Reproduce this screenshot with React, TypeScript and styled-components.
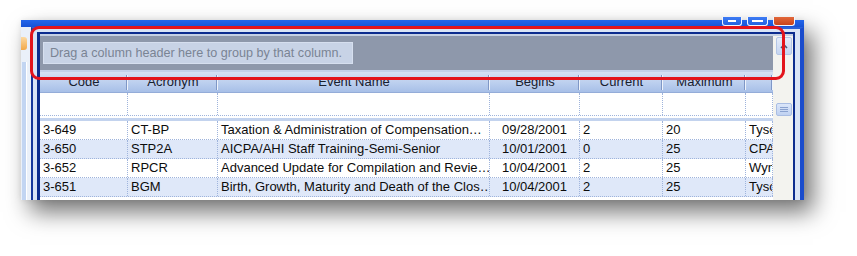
import styled, { createGlobalStyle } from 'styled-components';

const Global = createGlobalStyle`
  html, body {
    margin: 0;
    padding: 0;
    background: #fff;
  }
  body {
    font-family: "Liberation Sans", Arial, sans-serif;
  }
`;

const Canvas = styled.div`
  width: 857px;
  height: 256px;
  box-sizing: border-box;
  padding: 20px 0 0 21px;
  background: #fff;
  overflow: hidden;
`;

const Shot = styled.div`
  position: relative;
  width: 783px;
  height: 180px;
  display: flex;
  flex-direction: column;
  box-shadow: 9px 12px 22px rgba(0, 0, 0, 0.55), 0 0 6px rgba(0, 0, 0, 0.08);
`;

const TitleStrip = styled.div`
  flex: none;
  height: 7px;
  display: flex;
  justify-content: flex-end;
  align-items: flex-start;
  gap: 5px;
  padding-right: 9px;
  background: linear-gradient(#2466ea, #1652d6);
`;

const CaptionButton = styled.div<{ $close?: boolean; $w: number }>`
  width: ${p => p.$w}px;
  height: 9px;
  margin-top: -3px;
  box-sizing: border-box;
  border: 1px solid #f2f6ff;
  border-top: none;
  border-radius: 0 0 3px 3px;
  background: ${p => (p.$close ? 'linear-gradient(#e2683a, #c9431b)' : 'linear-gradient(#3d7bf4, #2262e2)')};
  display: flex;
  align-items: flex-end;
  justify-content: center;
  padding-bottom: 3px;
`;

const CaptionGlyph = styled.div<{ $w: number }>`
  width: ${p => p.$w}px;
  height: 2px;
  background: #fff;
`;

const Body = styled.div`
  flex: 1;
  min-height: 0;
  display: flex;
  overflow: hidden;
`;

const SideStrip = styled.div`
  flex: none;
  width: 10px;
  display: flex;
  flex-direction: column;
  gap: 12px;
  padding-top: 10px;
  box-sizing: border-box;
  background: #eaf0f9;
`;

const SideTab = styled.div`
  width: 6px;
  height: 13px;
  border-radius: 0 3px 3px 0;
  background: linear-gradient(#fcd9a2, #f2a848);
`;

const SideBar = styled.div`
  flex: 1;
  width: 4px;
  margin-left: 1px;
  background: #c2d5f2;
  border-right: 1px solid #fff;
`;

const Frame = styled.div`
  flex: 1;
  display: flex;
  border-left: 2px solid #16389c;
  border-top: 2px solid #2a60d8;
  border-right: 4px solid #1a4ccc;
  padding: 3px 5px 0 4px;
  background: #d9e4f6;
`;

const Control = styled.div`
  flex: 1;
  display: flex;
  border: 0 solid #0c2c8e;
  border-width: 2px 2px 0 3px;
  padding-top: 2px;
  background: #c6d1e4;
`;

const Main = styled.div`
  width: 733px;
  flex: none;
  display: flex;
  flex-direction: column;
  background: #fff;
`;

const GroupPanel = styled.div`
  flex: none;
  height: 36px;
  padding: 6px 0 0 3px;
  box-sizing: border-box;
  background: #8e98ab;
  border-bottom: 2px solid #c3d1ea;
`;

const DropBox = styled.div`
  width: 310px;
  height: 22px;
  box-sizing: border-box;
  padding-left: 6px;
  border: 1px solid #d6dfef;
  background: #c8d3e6;
  color: #7a8494;
  font-size: 12.6px;
  line-height: 20px;
  white-space: nowrap;
`;

const COLS = '88px 90px 272px 90px 83px 83px 1fr';

const HeaderRow = styled.div`
  flex: none;
  height: 21px;
  display: grid;
  grid-template-columns: ${COLS};
  background: linear-gradient(#d6e1f4, #b9cdee 60%, #a7bfe7);
  border-bottom: 1px solid #94acd8;
  box-sizing: border-box;
`;

const HeaderCell = styled.div`
  font-size: 13px;
  line-height: 20px;
  color: #18202e;
  text-align: center;
  white-space: nowrap;
  overflow: hidden;
  background:
    linear-gradient(#7f97c6, #7f97c6) no-repeat right 1px center / 1px 15px,
    linear-gradient(#eef3fb, #eef3fb) no-repeat right 0 center / 1px 15px;
`;

const FilterRow = styled.div`
  flex: none;
  height: 23px;
  display: grid;
  grid-template-columns: ${COLS};
  border-bottom: 1px dotted #9fb4dc;
  box-sizing: border-box;
`;

const FilterCell = styled.div`
  border-right: 1px dotted #9fb4dc;
`;

const Splitter = styled.div`
  flex: none;
  height: 5px;
  background: linear-gradient(#fff 0 2px, #c3d3ee 2px);
`;

const DataRow = styled.div<{ $alt: boolean }>`
  flex: none;
  height: 19px;
  display: grid;
  grid-template-columns: ${COLS};
  box-sizing: border-box;
  border-bottom: 1px dotted #9fb4dc;
  background: ${p => (p.$alt ? '#dfe8f9' : '#fff')};
`;

const Cell = styled.div<{ $center?: boolean }>`
  padding-left: ${p => (p.$center ? 0 : 3)}px;
  font-size: 13px;
  line-height: 18px;
  color: #0c0c0c;
  white-space: nowrap;
  overflow: hidden;
  text-align: ${p => (p.$center ? 'center' : 'left')};
  border-right: 1px dotted #9fb4dc;
`;

const Scrollbar = styled.div`
  width: 20px;
  flex: none;
  display: flex;
  flex-direction: column;
  align-items: center;
  padding: 1px 0 0 2px;
  box-sizing: border-box;
  background: #f3f3ef;
`;

const ScrollButton = styled.div`
  width: 16px;
  height: 18px;
  box-sizing: border-box;
  border: 1px solid #b4c6e6;
  border-radius: 2px;
  background: linear-gradient(#e4ecfa, #c5d5f1);
  display: flex;
  align-items: center;
  justify-content: center;
`;

const Thumb = styled.div`
  width: 16px;
  height: 13px;
  margin-top: 48px;
  box-sizing: border-box;
  border: 1px solid #a9bde3;
  border-radius: 2px;
  background: linear-gradient(#dbe6fa, #bfd1f1);
  display: flex;
  flex-direction: column;
  align-items: center;
  justify-content: center;
  gap: 1px;
`;

const Grip = styled.div`
  width: 8px;
  height: 1px;
  background: #8aa2d0;
`;

const Highlight = styled.div`
  position: absolute;
  left: 9px;
  top: 6px;
  width: 755px;
  height: 54px;
  box-sizing: border-box;
  border: 3px solid #e3141c;
  border-radius: 9px;
  pointer-events: none;
`;

const headers = ['Code', 'Acronym', 'Event Name', 'Begins', 'Current', 'Maximum', ''];

const rows = [
  { code: '3-649', acronym: 'CT-BP', name: 'Taxation & Administration of Compensation…', begins: '09/28/2001', current: '2', max: '20', place: 'Tysons Corner' },
  { code: '3-650', acronym: 'STP2A', name: 'AICPA/AHI Staff Training-Semi-Senior', begins: '10/01/2001', current: '0', max: '25', place: 'CPA Center' },
  { code: '3-652', acronym: 'RPCR', name: 'Advanced Update for Compilation and Revie…', begins: '10/04/2001', current: '2', max: '25', place: 'Wyndham' },
  { code: '3-651', acronym: 'BGM', name: 'Birth, Growth, Maturity and Death of the Clos…', begins: '10/04/2001', current: '2', max: '25', place: 'Tysons Corner' },
];

export default function App() {
  return (
    <>
      <Global />
      <Canvas>
        <Shot>
          <TitleStrip>
            <CaptionButton $w={20}><CaptionGlyph $w={8} /></CaptionButton>
            <CaptionButton $w={21}><CaptionGlyph $w={11} /></CaptionButton>
            <CaptionButton $w={22} $close />
          </TitleStrip>
          <Body>
            <SideStrip>
              <SideTab />
              <SideBar />
            </SideStrip>
            <Frame>
              <Control>
                <Main>
                  <GroupPanel>
                    <DropBox>Drag a column header here to group by that column.</DropBox>
                  </GroupPanel>
                  <HeaderRow>
                    {headers.map((h, i) => <HeaderCell key={i}>{h}</HeaderCell>)}
                  </HeaderRow>
                  <FilterRow>
                    {headers.map((_, i) => <FilterCell key={i} />)}
                  </FilterRow>
                  <Splitter />
                  {rows.map((r, i) => (
                    <DataRow key={r.code} $alt={i % 2 === 1}>
                      <Cell>{r.code}</Cell>
                      <Cell>{r.acronym}</Cell>
                      <Cell>{r.name}</Cell>
                      <Cell $center>{r.begins}</Cell>
                      <Cell>{r.current}</Cell>
                      <Cell>{r.max}</Cell>
                      <Cell>{r.place}</Cell>
                    </DataRow>
                  ))}
                </Main>
                <Scrollbar>
                  <ScrollButton>
                    <svg width="8" height="6" viewBox="0 0 8 6">
                      <path d="M1 5 L4 2 L7 5" fill="none" stroke="#4a5a78" strokeWidth="1.6" />
                    </svg>
                  </ScrollButton>
                  <Thumb>
                    <Grip />
                    <Grip />
                    <Grip />
                  </Thumb>
                </Scrollbar>
              </Control>
            </Frame>
          </Body>
          <Highlight />
        </Shot>
      </Canvas>
    </>
  );
}
